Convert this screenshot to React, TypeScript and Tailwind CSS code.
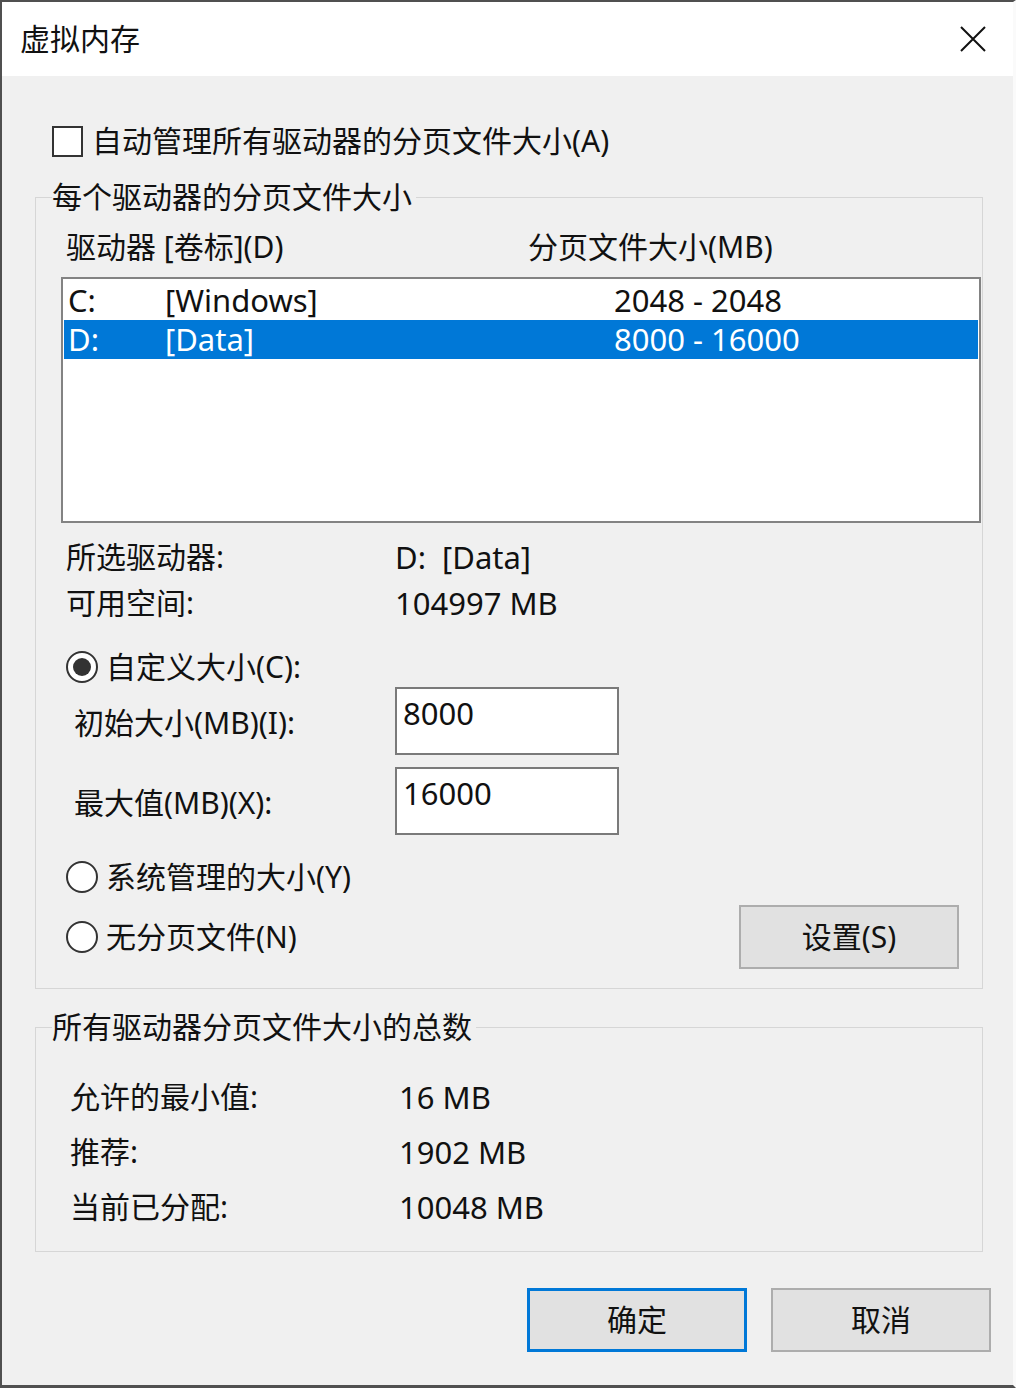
import React from 'react';

const font = { fontFamily: '"Noto Sans", "Noto Sans CJK SC", sans-serif' };

function Radio({ checked }: { checked?: boolean }) {
    return (
        <span className="w-[32px] h-[32px] shrink-0 rounded-full border-2 border-[#333] bg-white flex items-center justify-center">
            {checked && <span className="w-[18px] h-[18px] rounded-full bg-[#333]" />}
        </span>
    );
}

function TextBox({ value }: { value: string }) {
    return (
        <div className="w-[224px] h-[68px] border-2 border-[#7a7a7a] bg-white pl-[6px] pt-[4px] leading-[40px] text-[31px]">
            {value}
        </div>
    );
}

export default function App() {
    const drives = [
        { letter: 'C:', label: '[Windows]', size: '2048 - 2048', selected: false },
        { letter: 'D:', label: '[Data]', size: '8000 - 16000', selected: true },
    ];

    return (
        <div
            style={font}
            className="w-[1016px] h-[1388px] flex flex-col bg-[#f0f0f0] text-[30px] text-[#111] border-l-2 border-t-2 border-b-[3px] border-[#505050] border-r-[3px] border-r-[#fafafa] overflow-hidden"
        >
            {/* Title bar */}
            <div className="h-[74px] shrink-0 bg-white flex items-center justify-between pl-[18px] pr-[26px]">
                <span className="leading-[40px]">虚拟内存</span>
                <svg width="28" height="28" viewBox="0 0 28 28" fill="none" stroke="#111" strokeWidth="2">
                    <path d="M2 2 L26 26 M26 2 L2 26" />
                </svg>
            </div>

            {/* Auto manage checkbox */}
            <div className="mt-[45px] ml-[50px] flex items-center h-[40px] gap-[9px]">
                <span className="w-[31px] h-[31px] border-2 border-[#333] bg-white shrink-0" />
                <span className="leading-[40px]">自动管理所有驱动器的分页文件大小(A)</span>
            </div>

            {/* Per drive group */}
            <fieldset className="mt-[16px] ml-[33px] w-[948px] border border-[#d6d6d6] pl-[16px] pb-[19px]">
                <legend className="leading-[40px] pr-[4px]">每个驱动器的分页文件大小</legend>

                <div className="mt-[10px] ml-[14px] flex leading-[40px]">
                    <span className="w-[462px]">驱动器 [卷标](D)</span>
                    <span>分页文件大小(MB)</span>
                </div>

                <div className="mt-[10px] ml-[9px] w-[920px] h-[246px] border-2 border-[#838383] bg-white px-[1px] pt-[2px] text-[31px]">
                    {drives.map((d) => (
                        <div
                            key={d.letter}
                            className={`h-[39px] flex items-center pl-[4px] leading-[39px] ${
                                d.selected ? 'bg-[#0078d7] text-white' : 'text-[#111]'
                            }`}
                        >
                            <span className="w-[97px]">{d.letter}</span>
                            <span className="w-[449px]">{d.label}</span>
                            <span>{d.size}</span>
                        </div>
                    ))}
                </div>

                <div className="mt-[14px] ml-[14px] flex leading-[40px]">
                    <span className="w-[329px]">所选驱动器:</span>
                    <span className="text-[31px]">D:&nbsp;&nbsp;[Data]</span>
                </div>
                <div className="mt-[6px] ml-[14px] flex leading-[40px]">
                    <span className="w-[329px]">可用空间:</span>
                    <span className="text-[31px]">104997 MB</span>
                </div>

                {/* Custom size */}
                <div className="mt-[24px] ml-[14px] flex items-center gap-[8px] h-[40px]">
                    <Radio checked />
                    <span className="leading-[40px]">自定义大小(C):</span>
                </div>
                <div className="ml-[22px] flex items-start">
                    <span className="w-[321px] mt-[16px] leading-[40px]">初始大小(MB)(I):</span>
                    <TextBox value="8000" />
                </div>
                <div className="mt-[12px] ml-[22px] flex items-start">
                    <span className="w-[321px] mt-[16px] leading-[40px]">最大值(MB)(X):</span>
                    <TextBox value="16000" />
                </div>

                <div className="mt-[22px] ml-[14px] flex items-center gap-[8px] h-[40px]">
                    <Radio />
                    <span className="leading-[40px]">系统管理的大小(Y)</span>
                </div>
                <div className="mt-[8px] ml-[14px] mr-[23px] flex items-center justify-between h-[64px]">
                    <div className="flex items-center gap-[8px]">
                        <Radio />
                        <span className="leading-[40px]">无分页文件(N)</span>
                    </div>
                    <button className="w-[220px] h-[64px] bg-[#e1e1e1] border-2 border-[#adadad] leading-[40px]">
                        设置(S)
                    </button>
                </div>
            </fieldset>

            {/* Totals group */}
            <fieldset className="mt-[18px] ml-[33px] w-[948px] border border-[#d6d6d6] pl-[16px] pb-[24px]">
                <legend className="leading-[40px] pr-[4px]">所有驱动器分页文件大小的总数</legend>
                <div className="mt-[30px] ml-[18px] flex flex-col gap-[15px]">
                    {[
                        ['允许的最小值:', '16 MB'],
                        ['推荐:', '1902 MB'],
                        ['当前已分配:', '10048 MB'],
                    ].map(([k, v]) => (
                        <div key={k} className="flex leading-[40px]">
                            <span className="w-[329px]">{k}</span>
                            <span className="text-[31px]">{v}</span>
                        </div>
                    ))}
                </div>
            </fieldset>

            {/* Dialog buttons */}
            <div className="mt-[36px] flex justify-end gap-[24px] pr-[22px]">
                <button className="w-[220px] h-[64px] bg-[#e1e1e1] border-[3px] border-[#0078d7] leading-[40px]">
                    确定
                </button>
                <button className="w-[220px] h-[64px] bg-[#e1e1e1] border-2 border-[#adadad] leading-[40px]">
                    取消
                </button>
            </div>
        </div>
    );
}
